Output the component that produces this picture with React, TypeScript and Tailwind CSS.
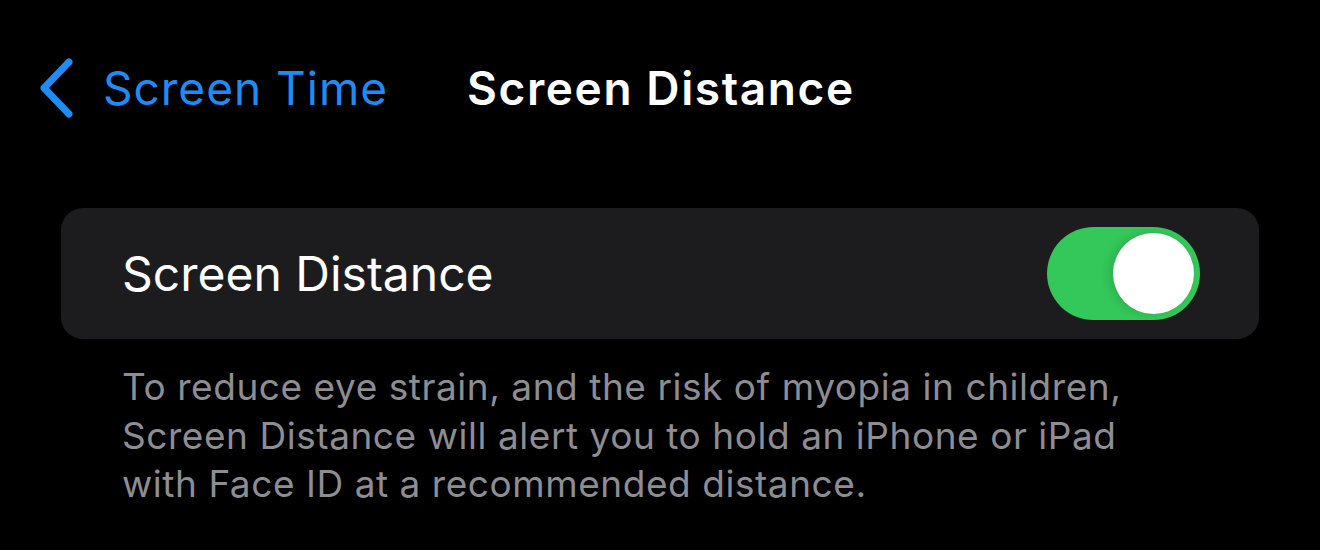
const font = { fontFamily: 'Inter, "Noto Sans", sans-serif' };

function Chevron() {
  return (
    <svg width="36" height="60" viewBox="0 0 36 60" className="shrink-0">
      <polyline
        points="30,4 5,30 30,56"
        fill="none"
        stroke="#1f8bf5"
        strokeWidth="7"
        strokeLinecap="round"
        strokeLinejoin="round"
      />
    </svg>
  );
}

function Toggle() {
  return (
    <div className="flex h-[93px] w-[153px] items-center justify-end rounded-full bg-[#34c759] p-[6px]">
      <div className="h-[81px] w-[81px] rounded-full bg-white shadow-[-4px_0_8px_rgba(0,0,0,0.12)]" />
    </div>
  );
}

export default function App() {
  return (
    <div className="h-[550px] w-[1320px] overflow-hidden bg-black" style={font}>
      <header className="mt-[40px] flex h-[96px] items-center pl-[39px]">
        <Chevron />
        <span className="ml-[28px] text-[46px] font-normal tracking-[1px] text-[#1f8bf5]">
          Screen Time
        </span>
        <span className="ml-[79px] text-[46px] font-semibold tracking-[1.6px] text-white">
          Screen Distance
        </span>
      </header>

      <div className="mx-[61px] mt-[72px] flex h-[131px] items-center justify-between rounded-[22px] bg-[#1c1c1e] pl-[61px] pr-[59px]">
        <span className="text-[48px] font-normal text-white">Screen Distance</span>
        <Toggle />
      </div>

      <p className="mt-[24px] pl-[122px] pr-[60px] text-[37px] leading-[48.5px] tracking-[0.55px] text-[#8d8d93]">
        To reduce eye strain, and the risk of myopia in children,
        <br />
        Screen Distance will alert you to hold an iPhone or iPad
        <br />
        with Face ID at a recommended distance.
      </p>
    </div>
  );
}
